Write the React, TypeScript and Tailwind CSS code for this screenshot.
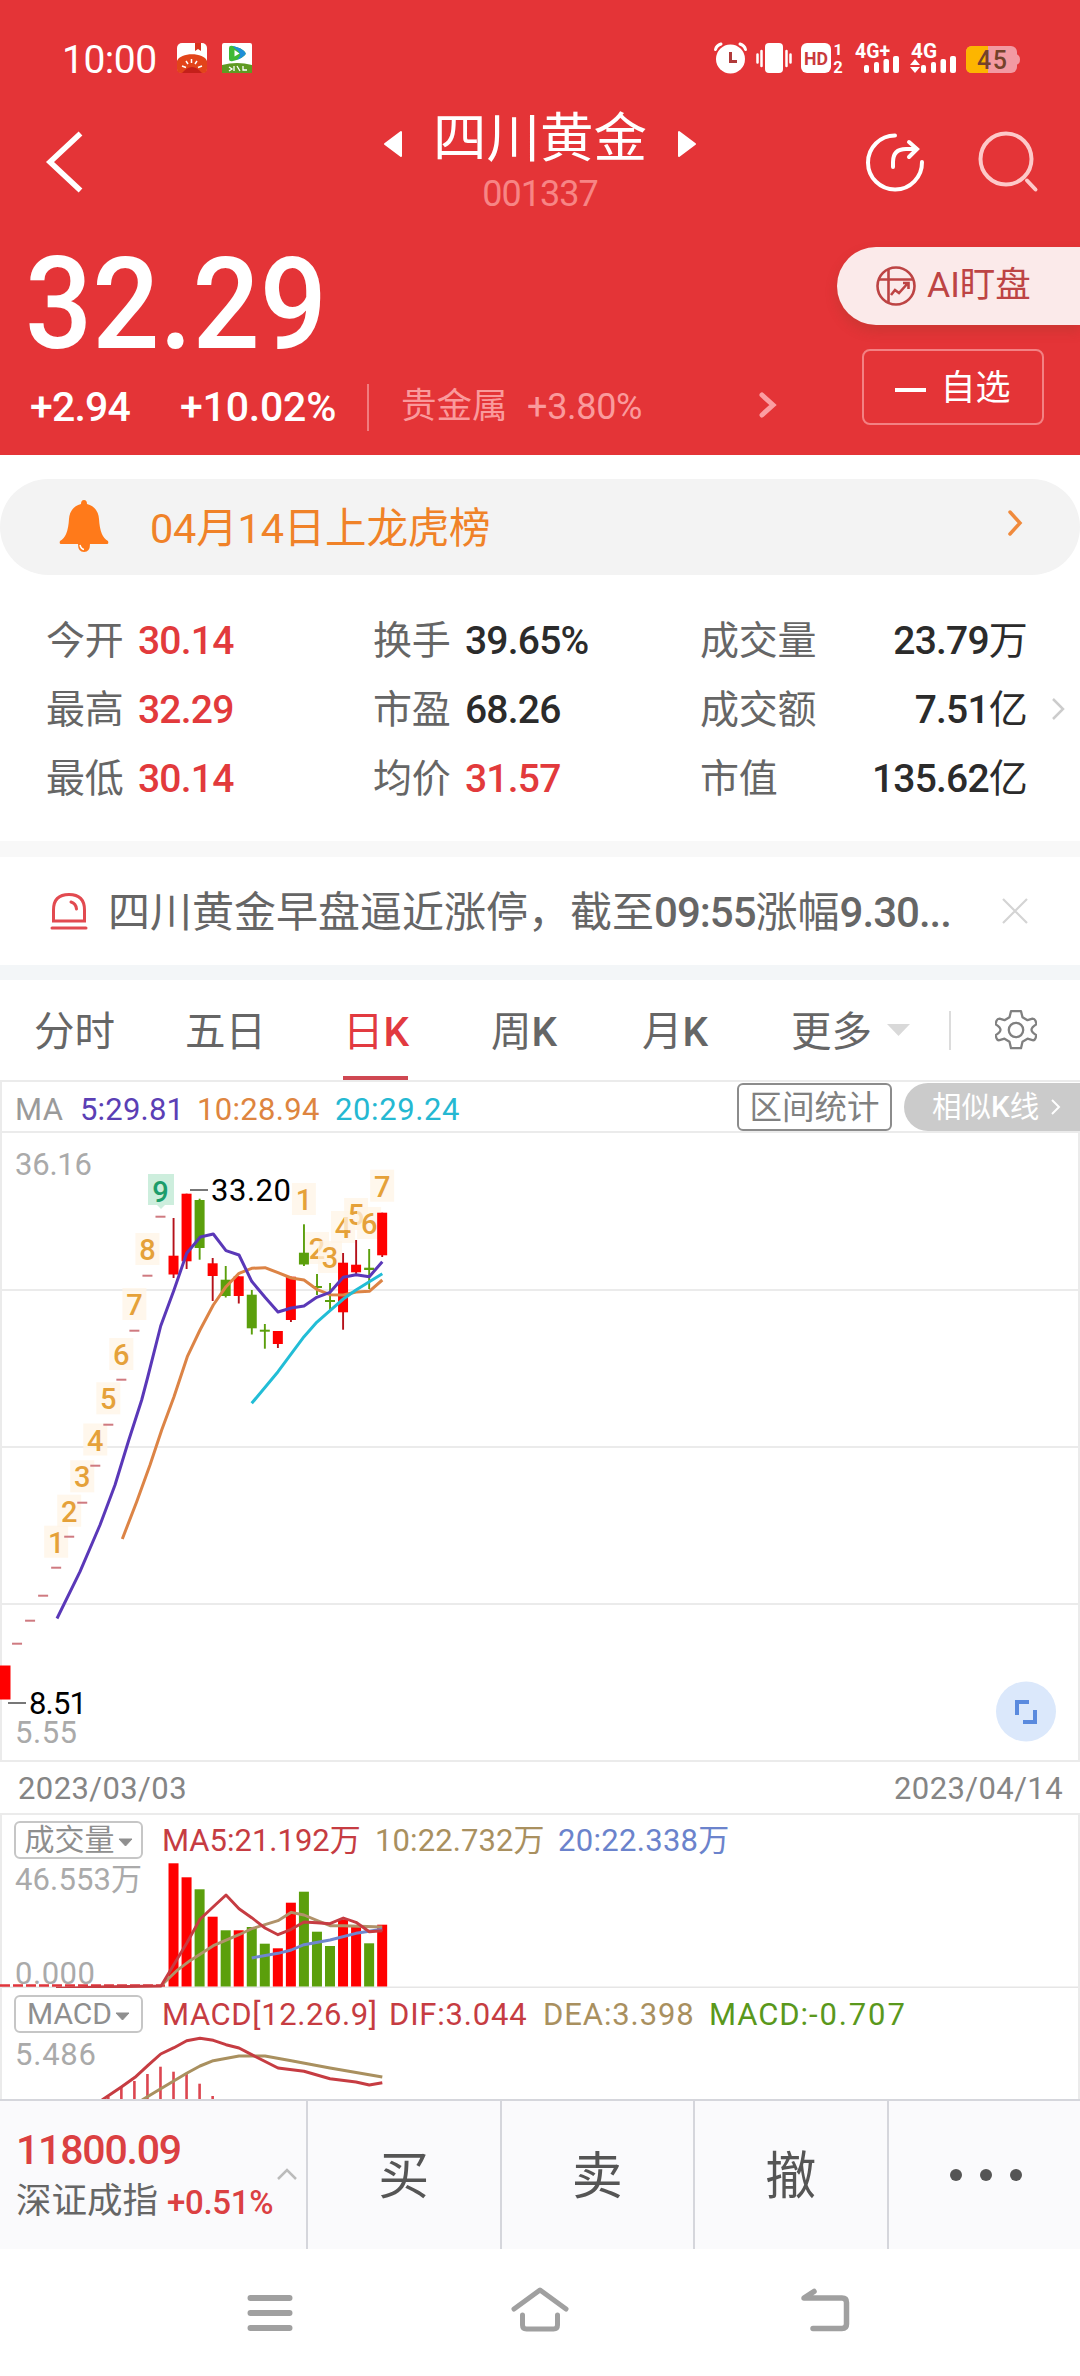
import React from 'react'

const RED = '#ff0000'
const GREEN = '#5b9f0c'

// x centre of the n-th trading day
const dayX = (i: number) => 4 + 13.04 * i

interface Candle {
  i: number
  top: number
  bottom: number
  high: number
  low: number
  up: boolean
}

const candles: Candle[] = [
  { i: 13, top: 1255.7, bottom: 1274.5, high: 1218, low: 1278, up: true },
  { i: 14, top: 1193.7, bottom: 1261.3, high: 1193.7, low: 1269, up: true },
  { i: 15, top: 1200, bottom: 1248, high: 1198.7, low: 1259.7, up: false },
  { i: 16, top: 1263.3, bottom: 1276, high: 1258, low: 1301, up: true },
  { i: 17, top: 1279.7, bottom: 1296, high: 1266, low: 1297.5, up: false },
  { i: 18, top: 1276.3, bottom: 1296, high: 1276.3, low: 1303.5, up: true },
  { i: 19, top: 1294.7, bottom: 1328.3, high: 1290, low: 1334.5, up: false },
  { i: 20, top: 1329.7, bottom: 1331.7, high: 1324, low: 1348.7, up: false },
  { i: 21, top: 1331, bottom: 1344, high: 1331, low: 1348, up: true },
  { i: 22, top: 1276.7, bottom: 1320, high: 1276.7, low: 1322, up: true },
  { i: 23, top: 1252.7, bottom: 1264.5, high: 1224.3, low: 1266, up: false },
  { i: 24, top: 1286, bottom: 1288, high: 1274, low: 1295, up: false },
  { i: 25, top: 1300, bottom: 1302, high: 1283, low: 1311, up: false },
  { i: 26, top: 1262.7, bottom: 1312.3, high: 1253, low: 1329.7, up: true },
  { i: 27, top: 1264.7, bottom: 1272.3, high: 1240, low: 1274, up: true },
  { i: 28, top: 1267.7, bottom: 1270, high: 1249, low: 1289, up: false },
  { i: 29, top: 1212.7, bottom: 1255.3, high: 1212.7, low: 1257, up: true },
]

// one-price limit-up days, index 1 to 12
const limitDays = [1643.7, 1620.7, 1595.7, 1567.7, 1536.7, 1502.7, 1465.7, 1424.7, 1379.7, 1330.7, 1275.7, 1216.7]

// [count, day index, baseline], later marks cover the earlier ones
const counts: [number, number, number][] = [
  [1, 4, 1552.7],
  [2, 5, 1521.7],
  [3, 6, 1487.3],
  [4, 7, 1450.5],
  [5, 8, 1409.3],
  [6, 9, 1365],
  [7, 10, 1315],
  [8, 11, 1260],
  [1, 23, 1210],
  [2, 24, 1259],
  [3, 25, 1268],
  [4, 26, 1238],
  [5, 27, 1225],
  [6, 28, 1234],
  [7, 29, 1196.7],
]

const ma5 = '57,1618.5 80,1571.7 100,1525 115,1485 128.5,1441 141.7,1400 147.5,1378 160.7,1326 174,1290 186.7,1253.3 200.3,1237 213.3,1234 226,1250.7 239,1255 251.7,1281.3 265,1297.3 278,1312 291.3,1308 304,1306 316.7,1297.3 330,1292.3 343.3,1277.3 356,1274.7 369.3,1276.7 382.3,1261.7'
const ma10 = '122.3,1539 136.7,1501.7 150,1465 161.7,1430 174,1396.7 187.3,1356.7 200,1330 213.3,1305 226,1286.7 239,1273.3 251.7,1268.3 265,1267.7 278,1272.7 291.3,1278 304,1280 316.7,1289.3 330,1294.7 343.3,1295 356,1292 369.3,1291.3 382.3,1280'
const ma20 = '251.7,1403.3 278,1371.7 304,1336.7 316.7,1322.3 330,1310.7 343.3,1299 356,1290 369.3,1281.7 382.3,1273.7'

// [top, up] for day 13 onwards
const volumes: [number, boolean][] = [
  [1863.3, true], [1877.3, true], [1889.3, false], [1916.7, true], [1930.3, false], [1930.3, true],
  [1927, false], [1943.7, false], [1948.3, true], [1902.7, true], [1891.7, false], [1931.7, false],
  [1946, false], [1919.3, true], [1926.7, true], [1943.3, false], [1924.7, true],
]

const volMa5 = '56,1988.3 83,1987.6 96,1987 161,1986 186.7,1943.3 200,1919.3 213.3,1906.7 226,1895 239,1908.7 251.7,1917.7 265,1928 278,1934.7 291.3,1929.3 304,1922 316.7,1922.7 330,1923.7 343.3,1918 356,1922.3 369.3,1931.7 382.3,1930.7'
const volMa10 = '161,1985.7 176.7,1970.7 190,1960.7 213.3,1945.7 239,1934.7 251.7,1928.7 278,1920.7 291.3,1912.3 304,1915 316.7,1920.3 330,1925.7 343.3,1925.7 382.3,1927'
const volMa20 = '251.7,1958 278,1953.3 291.3,1950 304,1944.7 330,1940 356,1933.3 382.3,1929.3'

const dif = '102,2100 121.7,2086.7 135,2077.3 147.7,2065.7 160.7,2054 174,2047.7 186.7,2040.7 200,2038.3 213.3,2040.3 226,2044.7 239,2048 251.7,2054.7 278,2068 304,2071.3 330,2078.7 356,2082 369.3,2085 382.3,2082.7'
const dea = '142,2100 160.7,2088.7 186.7,2073.3 200,2066 213.3,2060.7 239,2056 265,2056 291.3,2060.7 330,2068 382.3,2077'
const macdBars = [2096.7, 2086.7, 2081, 2074, 2066.7, 2071.7, 2074, 2083.7, 2096]

// [label, value, unit, up]
const stats: [string, string, string, boolean][][] = [
  [
    ['今开', '30.14', '', true],
    ['最高', '32.29', '', true],
    ['最低', '30.14', '', true],
  ],
  [
    ['换手', '39.65%', '', false],
    ['市盈', '68.26', '', false],
    ['均价', '31.57', '', true],
  ],
  [
    ['成交量', '23.79', '万', false],
    ['成交额', '7.51', '亿', false],
    ['市值', '135.62', '亿', false],
  ],
]

function SignalBars() {
  return (
    <g fill="#fff">
      <rect x="0" y="9" width="5" height="8" rx="2" />
      <rect x="10" y="6" width="5" height="11" rx="2" />
      <rect x="19.5" y="3" width="5.5" height="14" rx="2" />
      <rect x="29" y="0" width="6" height="17" rx="2" />
    </g>
  )
}

function StatusBar() {
  return (
    <div className="flex h-[100px] items-center pt-[15px] pl-[62px]">
      <span className="mt-[6px] w-[115px] text-[39px] leading-none tracking-[-0.5px] text-white">10:00</span>
      <svg className="h-[30px] w-[30px]" viewBox="0 0 30 30">
        <rect width="30" height="30" rx="5" fill="#fff" />
        <path d="M18 0h6v8l-3-2-3 2z" fill="#d8321e" />
        <path d="M0 18C3 9 27 9 30 18v8q0 4-4 4H4q-4 0-4-4z" fill="#e2441a" />
        <path d="M5 30q10-12 20 0z" fill="#c4201a" />
        <path d="M14.500 16v4M9 18l2 3M20 18l-2 3M5 23l4 1.500M25 23l-4 1.500" stroke="#fff" strokeWidth="1.500" />
      </svg>
      <svg className="ml-[15px] h-[30px] w-[30px]" viewBox="0 0 30 30">
        <rect width="30" height="30" rx="2" fill="#fff" />
        <path d="M7 5q0-3 4-2 9 2 12 6 1.500 2 0 3-4 4-12 6-4 1-4-2z" fill="#3fb936" />
        <path d="M11 3q9 2 12 6 1.500 2 0 3-3 3-8 5 6-6 0-10-4-3-4-4z" fill="#1e8fd8" />
        <path d="M12.500 7l5 3.500-5 3z" fill="#fff" />
        <path d="M0 22q15-4 30 0v8H0z" fill="#5f9a22" />
        <path d="M7 24l3 2-3 2M12 23v5M15 23l3 5M21 23v4h4" stroke="#fff" strokeWidth="1.300" fill="none" />
      </svg>
      <svg className="ml-[462px] h-[32px] w-[306px] overflow-visible" viewBox="714 42 306 32">
        {/* alarm */}
        <circle cx="730.500" cy="59" r="14.500" fill="#fff" />
        <path d="M715.500 49.500q1-4 5.500-5.500M745.500 49.500q-1-4-5.500-5.500" stroke="#fff" strokeWidth="3" fill="none" strokeLinecap="round" />
        <path d="M730.500 52v9.500h6.500" stroke="#b03a3a" strokeWidth="3" fill="none" />
        {/* vibrate */}
        <rect x="765" y="43" width="18" height="30" rx="4" fill="#fff" />
        <path d="M761.500 51v15M757.500 54.500v8M786.500 51v15M790.500 54.500v8" stroke="#fff" strokeWidth="2.500" strokeLinecap="round" />
        {/* HD */}
        <rect x="801" y="43" width="30" height="30" rx="6" fill="#fff" />
        <text x="804" y="65" fontSize="19" fontWeight="700" fill="#c93a3c" textLength="24" lengthAdjust="spacingAndGlyphs">HD</text>
        <text x="838" y="55" fontSize="15.500" fontWeight="700" textAnchor="middle" fill="#fff">1</text>
        <text x="838" y="73" fontSize="16.500" fontWeight="700" textAnchor="middle" fill="#fff">2</text>
        {/* sim 1 */}
        <text x="855" y="58" fontSize="20" fontWeight="700" fill="#fff" textLength="35" lengthAdjust="spacingAndGlyphs">4G+</text>
        <g transform="translate(864 56)"><SignalBars /></g>
        {/* sim 2 */}
        <text x="911" y="58" fontSize="20" fontWeight="700" fill="#fff" textLength="26" lengthAdjust="spacingAndGlyphs">4G</text>
        <path d="M915 59l5 6h-10zM915 73l5-6h-10z" fill="#fff" />
        <g transform="translate(921 56)"><SignalBars /></g>
        {/* battery */}
        <rect x="966" y="46" width="51" height="27" rx="6" fill="#f29aa2" />
        <path d="M1016 54q4 1 4 5.500t-4 5.500z" fill="#f29aa2" />
        <path d="M988 46h-16q-6 0-6 6v15q0 6 6 6h16z" fill="#fdb500" />
        <text x="977" y="69" fontSize="25" fontWeight="500" fill="#74422a" textLength="30">45</text>
      </svg>
    </div>
  )
}

function TitleBar() {
  return (
    <div className="flex h-[124px] items-center">
      <svg className="ml-[44px] h-[64px] w-[40px]" viewBox="0 0 40 64">
        <path d="M36.500 3.500L6 32l30.500 28.500" stroke="#fff" strokeWidth="5.500" fill="none" />
      </svg>
      <div className="ml-[300px] flex w-[312px] flex-col items-center">
        <div className="flex w-full items-center justify-between">
          <svg className="mt-[10px] h-[28px] w-[18px]" viewBox="0 0 18 28">
            <path d="M1 14L17 2v24z" fill="#fff" stroke="#fff" strokeWidth="2" strokeLinejoin="round" />
          </svg>
          <span className="text-[53.5px] leading-[60px] text-white">四川黄金</span>
          <svg className="mt-[10px] h-[28px] w-[18px]" viewBox="0 0 18 28">
            <path d="M17 14L1 2v24z" fill="#fff" stroke="#fff" strokeWidth="2" strokeLinejoin="round" />
          </svg>
        </div>
        <span className="mt-[7px] mb-[4px] text-[36px] leading-[36px] tracking-[-1px] text-[#f78585]">001337</span>
      </div>
      <svg className="ml-[168px] h-[62px] w-[62px]" viewBox="0 0 62 62" fill="none" stroke="#fff" strokeWidth="4" strokeLinecap="round">
        <path d="M31 4.500A27 27 0 1 0 58 31" />
        <path d="M29 36v-5q0-13 13-13h10" />
        <path d="M45 11l8 7-8 8" />
      </svg>
      <svg className="ml-[51px] h-[62px] w-[62px]" viewBox="0 0 62 62" fill="none" stroke="#fdc9c9" strokeWidth="4" strokeLinecap="round">
        <circle cx="29" cy="28" r="25.500" />
        <path d="M50 49.500l8.500 9" />
      </svg>
    </div>
  )
}

function Header() {
  return (
    <header className="h-[455px] bg-[#e43437]">
      <StatusBar />
      <TitleBar />
      <div className="flex justify-between">
        <div className="pt-[16px] text-white">
          <div className="ml-[25px] w-[320px] origin-left scale-x-[0.925] text-[128px] leading-none font-medium">32.29</div>
          <div className="mt-[14px] flex h-[50px] items-center pl-[30px] text-[41px] leading-none font-medium whitespace-nowrap">
            <span className="w-[150px] tracking-[-0.8px]">+2.94</span>
            <span className="w-[187px] tracking-[-0.2px]">+10.02%</span>
            <span className="h-[47px] w-[2px] bg-[#f17c7e]" />
            <span className="ml-[32px] w-[126px] text-[35.5px] font-normal text-[#fa9a9c]">贵金属</span>
            <span className="w-[232px] text-[36px] font-normal tracking-[-0.3px] text-[#fa9a9c]">+3.80%</span>
            <svg className="mt-[-4px] h-[28px] w-[18px]" viewBox="0 0 18 28">
              <path d="M3 4l11 10L3 24" stroke="#fb9ea2" strokeWidth="5" fill="none" strokeLinecap="round" />
            </svg>
          </div>
        </div>
        <div className="flex w-[243px] flex-col pt-[23px]">
          <div className="flex h-[78px] items-center rounded-l-full bg-[#fbeaea] pl-[38px] shadow-[0_6px_12px_rgba(150,60,40,0.3)]">
            <svg className="h-[42px] w-[42px]" viewBox="0 0 42 42" fill="none" stroke="#bd4444" strokeWidth="2.600">
              <circle cx="21" cy="21" r="18.500" />
              <path d="M4 14.500h34M13.500 4v34M16 30l4-5 4 3 9-10M28 18h5.500v6" />
            </svg>
            <span className="ml-[10px] text-[35.5px] leading-none text-[#bd4444]">AI盯盘</span>
          </div>
          <div className="mt-[24px] ml-[25px] flex h-[76px] w-[182px] items-center justify-center gap-[14px] rounded-lg border-2 border-[#f38183] text-white">
            <span className="mt-[6px] h-[4px] w-[31px] bg-white" />
            <span className="mt-[3px] text-[35px] leading-none">自选</span>
          </div>
        </div>
      </div>
    </header>
  )
}

function Notice() {
  return (
    <div className="mt-[24px] flex h-[96px] items-center rounded-full bg-[#f3f3f3] pl-[58px]">
      <svg className="h-[56px] w-[52px]" viewBox="58 499 52 56">
        <path d="M84 500q3 0 3 4 11 3 12 15 1 18 9 22 1 3-1 3H61q-2 0-1-3 8-4 9-22 1-12 12-15 0-4 3-4z" fill="#ff7a1a" />
        <path d="M78 544q0 8 6 8t6-8z" fill="#ff7a1a" />
        <path d="M80 545q1 4 4 4.500" stroke="#fff" strokeWidth="1.500" fill="none" />
      </svg>
      <span className="mt-[3px] ml-[40px] w-[856px] text-[41.5px] leading-none tracking-[-0.2px] text-[#f08228]">04月14日上龙虎榜</span>
      <svg className="mt-[-8px] h-[28px] w-[18px]" viewBox="0 0 18 28">
        <path d="M4 3l10 11L4 25" stroke="#f08a3c" strokeWidth="3.500" fill="none" strokeLinecap="round" />
      </svg>
    </div>
  )
}

function Stats() {
  return (
    <div className="flex h-[266px] items-start pt-[32px] pl-[46px]">
      {stats.map((column, c) => (
        <div key={c} className="w-[327px]">
          {column.map(([label, value, unit, up]) => (
            <div key={label} className={'flex h-[69px] items-center text-[39px] leading-none whitespace-nowrap ' + (c === 2 ? 'justify-between' : '')}>
              <span className={'tracking-[-0.2px] text-[#666] ' + (c === 2 ? '' : 'w-[92px]')}>{label}</span>
              <span className={'tracking-[-0.8px] ' + (up ? 'text-[#e23a3c]' : 'text-[#2b2b2b]')}>
                <span className="font-medium">{value}</span>{unit}
              </span>
            </div>
          ))}
        </div>
      ))}
      <svg className="mt-[88px] ml-[22px] h-[28px] w-[18px]" viewBox="0 0 18 28">
        <path d="M4 4l10 10L4 24" stroke="#ccc" strokeWidth="2.500" fill="none" />
      </svg>
    </div>
  )
}

function News() {
  return (
    <div className="flex h-[108px] items-center pl-[50px]">
      <svg className="h-[40px] w-[38px]" viewBox="50 891 38 40" fill="none" stroke="#e24a50" strokeWidth="3">
        <path d="M53.500 921v-11q0-15.500 15.500-15.500T84.500 910v11z" strokeWidth="3" />
        <path d="M71 902q5 1.500 5.500 7M52 928h34" strokeLinecap="round" />
      </svg>
      <span className="mt-[3px] ml-[20px] w-[892px] text-[42px] leading-none whitespace-nowrap text-[#666]">
        四川黄金早盘逼近涨停，截至<span className="font-medium tracking-[-1px]">09:55</span>涨幅<span className="font-medium tracking-[-1px]">9.30...</span>
      </span>
      <svg className="h-[28px] w-[30px]" viewBox="0 0 30 28">
        <path d="M3 2l24 24M27 2L3 26" stroke="#d4d4d4" strokeWidth="2.200" />
      </svg>
    </div>
  )
}

function Tabs() {
  return (
    <nav className="flex h-[100px] items-center pl-[34px] text-[40.5px] leading-none whitespace-nowrap text-[#666]">
      <span className="w-[151px] pt-[4px]">分时</span>
      <span className="w-[158px] pt-[4px]">五日</span>
      <div className="flex h-full w-[148px] flex-col justify-between text-[#e23a40]">
        <span className="pt-[32px]">日<span className="font-medium">K</span></span>
        <span className="h-[4px] w-[65px] bg-[#cf4852]" />
      </div>
      <span className="w-[151px] pt-[4px]">周<span className="font-medium">K</span></span>
      <span className="w-[149px] pt-[4px]">月<span className="font-medium">K</span></span>
      <span className="pt-[4px]">更多</span>
      <svg className="ml-[15px] h-[12px] w-[23px]" viewBox="0 0 23 12">
        <path d="M0 0h23L11.500 12z" fill="#d9d9d9" />
      </svg>
      <span className="ml-[39px] h-[39px] w-[2px] bg-[#dcdcdc]" />
      <svg className="ml-[44px] h-[42px] w-[42px]" viewBox="994 1008 42 42" fill="none" stroke="#808080" strokeWidth="2.300" strokeLinejoin="round">
        <path d="M1010 1011h10l1.500 6 5 3 5-1.500q2 0 3 2l1 3.500q-5 3-5 5.500t5 5.500l-1 3q-1 2.500-3 2l-5-1.500-5 3-1.500 6.500h-10l-1.500-6.500-5-3-5 1.500q-2 .5-3-2l-1-3q5-3 5-5.500t-5-5.500l1-3.500q1-2 3-2l5 1.500 5-3z" transform="translate(0 -.8)" />
        <circle cx="1015" cy="1029" r="7.200" />
      </svg>
    </nav>
  )
}

function MaRow() {
  return (
    <div className="flex h-[53px] items-center border-y-2 border-l-2 border-[#ebebeb] pl-[13px] text-[31px] leading-none whitespace-nowrap">
      <span className="w-[65px] pt-[5px] tracking-[0.5px] text-[#9a9a9a]">MA</span>
      <span className="w-[117px] pt-[5px] tracking-[0.2px] text-[#5b3fb5]">5:29.81</span>
      <span className="w-[138px] pt-[5px] tracking-[0.3px] text-[#de8540]">10:28.94</span>
      <span className="w-[402px] pt-[5px] tracking-[0.6px] text-[#25b8d2]">20:29.24</span>
      <span className="flex h-[48px] w-[155px] items-center justify-center rounded-md border-2 border-[#8c8c8c] pt-[3px] text-[32.5px] text-[#808080]">区间统计</span>
      <span className="ml-[12px] flex h-[48px] flex-1 items-center rounded-l-full bg-[#cbcbcb] pl-[28px] text-[29.5px] text-white">
        <span className="pt-[3px]">相似<span className="font-medium">K</span>线</span>
        <svg className="ml-[11px] h-[18px] w-[12px]" viewBox="0 0 12 18">
          <path d="M2 2l7 7-7 7" stroke="#fff" strokeWidth="2" fill="none" />
        </svg>
      </span>
    </div>
  )
}

function CountMark({ n, x, y }: { n: number; x: number; y: number }) {
  return (
    <g>
      <rect x={x - 12} y={y - 27} width="24" height="32" fill="#fff4e6" fillOpacity="0.75" />
      <text x={x} y={y} fontSize="29" fontWeight="500" textAnchor="middle" fill="#e5a139">{n}</text>
    </g>
  )
}

function KLineChart() {
  return (
    <div className="h-[627px]">
      <svg className="h-[627px] w-[1080px]" viewBox="0 1133 1080 627">
        <path d="M0 1290h1080M0 1447h1080M0 1604h1080M1 1133v627M1079 1133v627" stroke="#ebebeb" strokeWidth="2" />
        <text x="15" y="1175" fontSize="31" fill="#aaa" textLength="77">36.16</text>
        <text x="15" y="1743" fontSize="31" fill="#aaa" textLength="62">5.55</text>
        {counts.map(([n, i, y]) => <CountMark key={i} n={n} x={dayX(i)} y={y} />)}
        <path d="M148 1174h26v31h-9l-4 4-4-4h-9z" fill="#cdeedd" />
        <text x="160.500" y="1201.500" fontSize="29" fontWeight="500" textAnchor="middle" fill="#1c9d6b">9</text>
        {limitDays.map((y, i) => (
          <rect key={y} x={dayX(i + 1) - 5} y={y - 1} width="10" height="2" fill="#cf7a80" />
        ))}
        <rect x="0" y="1665.500" width="10.500" height="34" fill={RED} />
        {candles.map(c => (
          <g key={c.i}>
            <rect x={dayX(c.i) - 0.9} y={c.high} width="1.900" height={c.low - c.high} fill={c.up ? '#b5121b' : GREEN} />
            <rect x={dayX(c.i) - 5} y={c.top} width="10" height={c.bottom - c.top} fill={c.up ? RED : GREEN} />
          </g>
        ))}
        <g fill="none" strokeWidth="3" strokeLinejoin="round">
          <polyline points={ma10} stroke="#dc8446" />
          <polyline points={ma20} stroke="#22bdd6" />
          <polyline points={ma5} stroke="#5a38b8" />
        </g>
        <path d="M190 1190h18M8 1703h18" stroke="#777" strokeWidth="2" />
        <text x="211" y="1200.500" fontSize="31" fill="#000" textLength="80">33.20</text>
        <text x="29" y="1713.500" fontSize="31" fill="#000" textLength="58">8.51</text>
        {/* fullscreen button */}
        <circle cx="1026" cy="1711.500" r="30" fill="#dbe8fb" />
        <path d="M1017 1715v-13h12M1035 1710v12h-12" stroke="#5a8ade" strokeWidth="4" fill="none" />
      </svg>
    </div>
  )
}

function DateRow() {
  return (
    <div className="flex h-[55px] items-center justify-between border-y-2 border-[#ebebeb] pt-px pr-[17px] pl-[18px] text-[31px] leading-none tracking-[0.4px] text-[#858585]">
      <span>2023/03/03</span>
      <span>2023/04/14</span>
    </div>
  )
}

function IndicatorBadge({ name }: { name: string }) {
  return (
    <span className="flex h-[38px] w-[129px] items-center justify-center gap-[3px] rounded-md border-2 border-[#c6c6c6] text-[30px] text-[#8f8f8f]">
      {name}
      <svg className="mt-[4px] h-[9px] w-[15px]" viewBox="0 0 15 9">
        <path d="M1 1h13L7.500 8z" fill="#8f8f8f" stroke="#8f8f8f" strokeLinejoin="round" />
      </svg>
    </span>
  )
}

function VolumePanel() {
  return (
    <div className="grid h-[173px] overflow-hidden">
      <svg className="col-start-1 row-start-1 h-[173px] w-[1080px]" viewBox="0 1815 1080 173">
        <path d="M0 1987.500h1080" stroke="#e6e6e6" strokeWidth="2" />
        <path d="M1 1815v173M1079 1815v173" stroke="#ebebeb" strokeWidth="2" />
        <text x="15" y="1890" fontSize="31" fill="#aaa" textLength="127">46.553万</text>
        <text x="15" y="1983.500" fontSize="31" fill="#aaa" textLength="80">0.000</text>
        <path d="M0 1985.500h165" stroke="#e0353b" strokeWidth="2.500" strokeDasharray="10 3" />
        {volumes.map(([top, up], k) => (
          <rect key={k} x={dayX(k + 13) - 5} y={top} width="10" height={1986.5 - top} fill={up ? RED : GREEN} />
        ))}
        <g fill="none" strokeWidth="2.900" strokeLinejoin="round">
          <polyline points={volMa10} stroke="#b0926a" />
          <polyline points={volMa20} stroke="#6f86cf" />
          <polyline points={volMa5} stroke="#c63c42" />
        </g>
      </svg>
      <div className="col-start-1 row-start-1 flex items-center self-start pt-[6px] pl-[14px] text-[31px] leading-none whitespace-nowrap">
        <IndicatorBadge name="成交量" />
        <span className="ml-[19px] w-[213px] text-[#c63c42]">MA5:21.192万</span>
        <span className="w-[183px] tracking-[0.1px] text-[#a9905f]">10:22.732万</span>
        <span className="tracking-[0.3px] text-[#6b83cc]">20:22.338万</span>
      </div>
    </div>
  )
}

function MacdPanel() {
  return (
    <div className="grid h-[111px] overflow-hidden">
      <svg className="col-start-1 row-start-1 h-[111px] w-[1080px]" viewBox="0 1988 1080 111">
        <path d="M1 1988v111M1079 1988v111" stroke="#ebebeb" strokeWidth="2" />
        <text x="15" y="2065" fontSize="31" fill="#aaa" textLength="81">5.486</text>
        {macdBars.map((top, k) => (
          <rect key={k} x={dayX(k + 8) - 1.3} y={top} width="2.600" height={2099 - top} fill="#dc4650" />
        ))}
        <g fill="none" strokeWidth="3" strokeLinejoin="round">
          <polyline points={dea} stroke="#a9905f" />
          <polyline points={dif} stroke="#c63c42" />
        </g>
      </svg>
      <div className="col-start-1 row-start-1 flex items-center self-start pt-[7px] pl-[14px] text-[31px] leading-none whitespace-nowrap">
        <IndicatorBadge name="MACD" />
        <span className="ml-[19px] w-[227px] tracking-[0.6px] text-[#c63c42]">MACD[12.26.9]</span>
        <span className="w-[154px] tracking-[0.8px] text-[#c63c42]">DIF:3.044</span>
        <span className="w-[166px] tracking-[0.9px] text-[#a9905f]">DEA:3.398</span>
        <span className="text-[#5a981c]">
          <span className="tracking-[0.9px]">MACD:</span><span className="tracking-[1.9px]">-0.707</span>
        </span>
      </div>
    </div>
  )
}

function TradeBar() {
  return (
    <div className="flex h-[150px] border-t-2 border-[#d5d6dc] bg-[#fafafc]">
      <div className="flex w-[306px] flex-col justify-center pt-[2px] pl-[16px] whitespace-nowrap text-[#db4042]">
        <span className="text-[41px] leading-[50px] font-medium tracking-[-1.2px]">11800.09</span>
        <div className="flex items-center leading-[50px]">
          <span className="text-[35.5px] text-[#666]">深证成指</span>
          <span className="mt-[3px] ml-[9px] w-[110px] text-[33px] font-medium tracking-[-0.3px]">+0.51%</span>
          <svg className="mt-[-54px] h-[14px] w-[20px]" viewBox="0 0 20 14">
            <path d="M1 12l9-9 9 9" stroke="#bbb" strokeWidth="2.500" fill="none" />
          </svg>
        </div>
      </div>
      {['买', '卖', '撤'].map(label => (
        <div key={label} className="flex w-[193.5px] items-center justify-center border-l-2 border-[#d5d6dc] pt-[2px] text-[51px] leading-none text-[#555]">{label}</div>
      ))}
      <div className="flex flex-1 items-center justify-center gap-[18px] border-l-2 border-[#d5d6dc] pl-[4px]">
        <span className="h-[12px] w-[12px] rounded-full bg-[#555]" />
        <span className="h-[12px] w-[12px] rounded-full bg-[#555]" />
        <span className="h-[12px] w-[12px] rounded-full bg-[#555]" />
      </div>
    </div>
  )
}

function SystemNav() {
  return (
    <div className="flex h-[127px] items-start bg-white pt-[35px]">
      <svg className="ml-[246px] h-[52px] w-[48px]" viewBox="246 2284 48 52">
        <path d="M250.500 2298h39M250.500 2313h39M250.500 2328h39" stroke="#a0a0a0" strokeWidth="6" strokeLinecap="round" />
      </svg>
      <svg className="ml-[214px] h-[52px] w-[64px]" viewBox="508 2284 64 52" fill="none" stroke="#a0a0a0" strokeWidth="5" strokeLinecap="round" strokeLinejoin="round">
        <path d="M514 2309l26-19 26 19" />
        <path d="M522.500 2315v10q0 4 4 4h27q4 0 4-4v-10" />
      </svg>
      <svg className="ml-[226px] h-[52px] w-[56px]" viewBox="798 2284 56 52" fill="none" stroke="#a0a0a0" strokeWidth="5.500" strokeLinecap="round" strokeLinejoin="round">
        <path d="M813 2328.500h29q4.500 0 4.500-4.500v-21.500q0-4.500-4.500-4.500h-38l10-6.500" />
      </svg>
    </div>
  )
}

export default function App() {
  return (
    <div className="h-[2376px] w-[1080px] overflow-hidden bg-white font-['Roboto','Noto_Sans_CJK_SC',sans-serif]">
      <Header />
      <Notice />
      <Stats />
      <div className="h-[16px] bg-[#f8f8f8]" />
      <News />
      <div className="h-[15px] bg-[#f3f6f8]" />
      <Tabs />
      <MaRow />
      <KLineChart />
      <DateRow />
      <VolumePanel />
      <MacdPanel />
      <TradeBar />
      <SystemNav />
    </div>
  )
}
